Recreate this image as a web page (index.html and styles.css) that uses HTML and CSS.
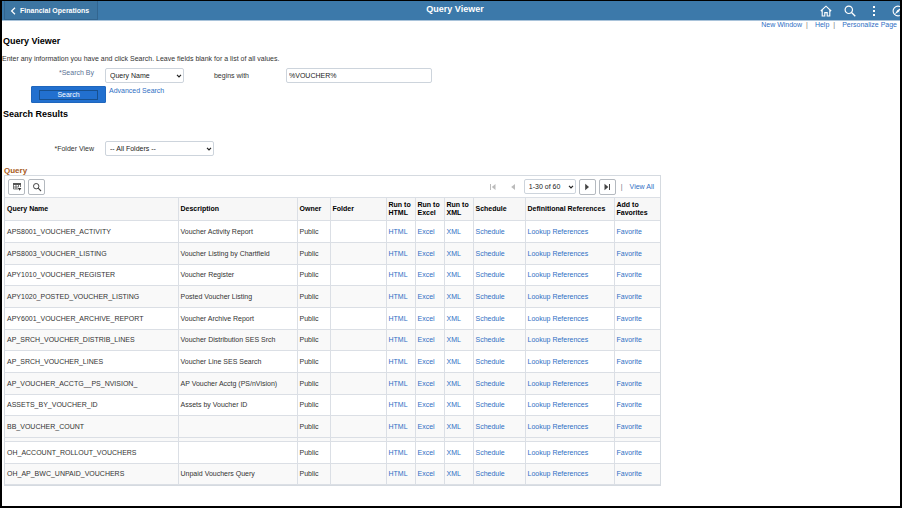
FILE: index.html
```html
<!DOCTYPE html>
<html lang="en">
<head>
    <meta charset="UTF-8">
    <title>Query Viewer</title>
    <meta name="viewport" content="width=device-width, initial-scale=1.0">
    <link rel="stylesheet" href="styles.css">
</head>
<body>
    <header class="topbar">
        <button class="back" type="button">
            <svg width="6" height="8" viewBox="0 0 6 8"><path d="M5 0.8 1.6 4 5 7.2" fill="none" stroke="#fff" stroke-width="1.2"/></svg>
            Financial Operations
        </button>
        <h1>Query Viewer</h1>
        <nav class="top-icons">
            <button type="button" aria-label="Home"><svg width="12" height="12" viewBox="0 0 12 12"><path d="M.8 6 6 1.2 11.2 6M2.2 5v6h2.6V7.6h2.4V11h2.6V5" fill="none" stroke="#fff" stroke-width="1.1"/></svg></button>
            <button type="button" aria-label="Search"><svg width="12" height="12" viewBox="0 0 12 12"><circle cx="4.8" cy="4.8" r="3.7" fill="none" stroke="#fff" stroke-width="1.2"/><path d="M7.5 7.5 11.3 11.3" stroke="#fff" stroke-width="1.3"/></svg></button>
            <button type="button" aria-label="Actions"><svg width="12" height="12" viewBox="0 0 12 12"><path d="M5 1h2v2H5zM5 5h2v2H5zM5 9h2v2H5z" fill="#fff"/></svg></button>
            <button type="button" aria-label="Navigator"><svg width="12" height="12" viewBox="0 0 12 12"><circle cx="6" cy="6" r="4.9" fill="none" stroke="#fff" stroke-width="1.1"/><path d="M9.2 2.8 6.8 6.8 2.8 9.2 5.2 5.2z" fill="#fff"/></svg></button>
        </nav>
    </header>

    <div class="page-links">
        <a href="#">New Window</a><span>|</span>
        <a href="#">Help</a><span>|</span>
        <a href="#">Personalize Page</a>
    </div>

    <main>
        <h2>Query Viewer</h2>
        <p class="intro">Enter any information you have and click Search. Leave fields blank for a list of all values.</p>
        <form class="search-form">
            <div class="form-row">
                <label class="search-by" for="searchBy">*Search By</label>
                <select id="searchBy" class="by-select"><option>Query Name</option></select>
                <label class="operator" for="searchText">begins with</label>
                <input type="text" id="searchText" value="%VOUCHER%">
            </div>
            <div class="form-actions">
                <button type="button" class="search-btn"><span>Search</span></button>
                <a href="#">Advanced Search</a>
            </div>
        </form>

        <h2 class="results-title">Search Results</h2>
        <div class="form-row folder-row">
            <label for="folder">*Folder View</label>
            <select id="folder" class="folder-select"><option>-- All Folders --</option></select>
        </div>

        <section class="grid">
            <h3>Query</h3>
            <div class="grid-box">
                <div class="toolbar">
                    <button type="button" class="tool" aria-label="Grid actions"><svg width="10" height="10" viewBox="0 0 10 10"><path d="M1 1h8v2H1z" fill="#555"/><path d="M1.5 1.5v5.5H6M1.5 5h5M4 2v5M6.5 2v3M8.5 2v3" fill="none" stroke="#555" stroke-width=".8"/><path d="M5.8 6h3.6L7.6 8.8z" fill="#333"/></svg></button>
                    <button type="button" class="tool" aria-label="Find"><svg width="10" height="10" viewBox="0 0 10 10"><circle cx="4.2" cy="4.2" r="2.7" fill="none" stroke="#444"/><path d="M6.2 6.2 9 9" stroke="#444" stroke-width="1.1"/></svg></button>
                    <div class="pager">
                        <button type="button" class="flat" aria-label="First" disabled><svg width="8" height="8" viewBox="0 0 8 8"><path d="M1 1h1v6H1zM6.5 1v6L2.8 4z" fill="#bbb"/></svg></button>
                        <button type="button" class="flat" aria-label="Previous" disabled><svg width="8" height="8" viewBox="0 0 8 8"><path d="M6 1v6L2.2 4z" fill="#bbb"/></svg></button>
                        <select class="page-select" aria-label="Rows"><option>1-30 of 60</option></select>
                        <button type="button" class="tool" aria-label="Next"><svg width="8" height="8" viewBox="0 0 8 8"><path d="M2.2 .8v6.4L6 4z" fill="#444"/></svg></button>
                        <button type="button" class="tool" aria-label="Last"><svg width="8" height="8" viewBox="0 0 8 8"><path d="M1.5 .8v6.4L5.3 4zM6 1h1v6H6z" fill="#444"/></svg></button>
                        <span class="sep">|</span>
                        <a href="#">View All</a>
                    </div>
                </div>
                <table>
                    <colgroup>
                        <col class="c-name"><col class="c-desc"><col class="c-owner"><col class="c-folder">
                        <col class="c-run"><col class="c-run"><col class="c-run"><col class="c-sched"><col class="c-refs"><col class="c-fav">
                    </colgroup>
                    <thead>
                        <tr><th>Query Name</th><th>Description</th><th>Owner</th><th>Folder</th><th>Run to HTML</th><th>Run to Excel</th><th>Run to XML</th><th>Schedule</th><th>Definitional References</th><th>Add to Favorites</th></tr>
                    </thead>
                    <tbody>
                        <tr><td>APS8001_VOUCHER_ACTIVITY</td><td>Voucher Activity Report</td><td>Public</td><td></td><td><a href="#">HTML</a></td><td><a href="#">Excel</a></td><td><a href="#">XML</a></td><td><a href="#">Schedule</a></td><td><a href="#">Lookup References</a></td><td><a href="#">Favorite</a></td></tr>
                        <tr><td>APS8003_VOUCHER_LISTING</td><td>Voucher Listing by Chartfield</td><td>Public</td><td></td><td><a href="#">HTML</a></td><td><a href="#">Excel</a></td><td><a href="#">XML</a></td><td><a href="#">Schedule</a></td><td><a href="#">Lookup References</a></td><td><a href="#">Favorite</a></td></tr>
                        <tr><td>APY1010_VOUCHER_REGISTER</td><td>Voucher Register</td><td>Public</td><td></td><td><a href="#">HTML</a></td><td><a href="#">Excel</a></td><td><a href="#">XML</a></td><td><a href="#">Schedule</a></td><td><a href="#">Lookup References</a></td><td><a href="#">Favorite</a></td></tr>
                        <tr><td>APY1020_POSTED_VOUCHER_LISTING</td><td>Posted Voucher Listing</td><td>Public</td><td></td><td><a href="#">HTML</a></td><td><a href="#">Excel</a></td><td><a href="#">XML</a></td><td><a href="#">Schedule</a></td><td><a href="#">Lookup References</a></td><td><a href="#">Favorite</a></td></tr>
                        <tr><td>APY6001_VOUCHER_ARCHIVE_REPORT</td><td>Voucher Archive Report</td><td>Public</td><td></td><td><a href="#">HTML</a></td><td><a href="#">Excel</a></td><td><a href="#">XML</a></td><td><a href="#">Schedule</a></td><td><a href="#">Lookup References</a></td><td><a href="#">Favorite</a></td></tr>
                        <tr><td>AP_SRCH_VOUCHER_DISTRIB_LINES</td><td>Voucher Distribution SES Srch</td><td>Public</td><td></td><td><a href="#">HTML</a></td><td><a href="#">Excel</a></td><td><a href="#">XML</a></td><td><a href="#">Schedule</a></td><td><a href="#">Lookup References</a></td><td><a href="#">Favorite</a></td></tr>
                        <tr><td>AP_SRCH_VOUCHER_LINES</td><td>Voucher Line SES Search</td><td>Public</td><td></td><td><a href="#">HTML</a></td><td><a href="#">Excel</a></td><td><a href="#">XML</a></td><td><a href="#">Schedule</a></td><td><a href="#">Lookup References</a></td><td><a href="#">Favorite</a></td></tr>
                        <tr><td>AP_VOUCHER_ACCTG__PS_NVISION_</td><td>AP Voucher Acctg (PS/nVision)</td><td>Public</td><td></td><td><a href="#">HTML</a></td><td><a href="#">Excel</a></td><td><a href="#">XML</a></td><td><a href="#">Schedule</a></td><td><a href="#">Lookup References</a></td><td><a href="#">Favorite</a></td></tr>
                        <tr><td>ASSETS_BY_VOUCHER_ID</td><td>Assets by Voucher ID</td><td>Public</td><td></td><td><a href="#">HTML</a></td><td><a href="#">Excel</a></td><td><a href="#">XML</a></td><td><a href="#">Schedule</a></td><td><a href="#">Lookup References</a></td><td><a href="#">Favorite</a></td></tr>
                        <tr><td>BB_VOUCHER_COUNT</td><td></td><td>Public</td><td></td><td><a href="#">HTML</a></td><td><a href="#">Excel</a></td><td><a href="#">XML</a></td><td><a href="#">Schedule</a></td><td><a href="#">Lookup References</a></td><td><a href="#">Favorite</a></td></tr>
                    </tbody>
                    <tbody class="more">
                        <tr class="gap"><td></td><td></td><td></td><td></td><td></td><td></td><td></td><td></td><td></td><td></td></tr>
                        <tr><td>OH_ACCOUNT_ROLLOUT_VOUCHERS</td><td></td><td>Public</td><td></td><td><a href="#">HTML</a></td><td><a href="#">Excel</a></td><td><a href="#">XML</a></td><td><a href="#">Schedule</a></td><td><a href="#">Lookup References</a></td><td><a href="#">Favorite</a></td></tr>
                        <tr><td>OH_AP_BWC_UNPAID_VOUCHERS</td><td>Unpaid Vouchers Query</td><td>Public</td><td></td><td><a href="#">HTML</a></td><td><a href="#">Excel</a></td><td><a href="#">XML</a></td><td><a href="#">Schedule</a></td><td><a href="#">Lookup References</a></td><td><a href="#">Favorite</a></td></tr>
                    </tbody>
                </table>
            </div>
        </section>
    </main>
</body>
</html>
```
FILE: styles.css
```css
* {
    box-sizing: border-box;
}
body {
    margin: 0;
    min-height: 100vh;
    border: 2px solid #000;
    border-top-width: 1px;
    background: #fff;
    color: #333;
    font-family: Arial, "Liberation Sans", sans-serif;
    font-size: 7px;
    line-height: 8px;
    overflow-x: hidden;
}
a {
    color: #2f6fc4;
    text-decoration: none;
}
h1, h2, h3, p {
    margin: 0;
}
button, select, input {
    font: inherit;
    color: inherit;
    margin: 0;
}
button {
    padding: 0;
    cursor: pointer;
}

/* top bar */
.topbar {
    display: grid;
    grid-template-columns: 1fr auto 1fr;
    height: 20px;
    background: #3c79aa;
    border-bottom: 1px solid #a9c3da;
    overflow: hidden;
}
.back {
    display: flex;
    align-items: center;
    justify-self: start;
    gap: 4px;
    margin-left: 2px;
    padding: 2px 8px 0 5px;
    background: #3c75a2;
    border: 1px solid #32658f;
    border-top: none;
    color: #fff;
    font-weight: bold;
}
h1 {
    padding-left: 8px;
    color: #fff;
    font-size: 9px;
    line-height: 17px;
}
.top-icons {
    display: flex;
    justify-content: flex-end;
    align-items: center;
    gap: 12px;
    margin-right: -4px;
}
.top-icons button {
    display: flex;
    background: none;
    border: none;
}
.page-links {
    display: flex;
    justify-content: flex-end;
    padding: 0 3px 0 0;
}
.page-links span {
    margin: 0 7px 0 4px;
    color: #777;
}

/* search form */
h2 {
    padding-left: 1px;
    color: #000;
    font-size: 9px;
    line-height: 12px;
}
main {
    padding-top: 6px;
}
.intro {
    margin-top: 8px;
}
.form-row {
    display: flex;
    align-items: center;
    margin-top: 5px;
}
.form-row label {
    width: 92px;
    margin-right: 11px;
    text-align: right;
}
.form-row .search-by {
    align-self: flex-start;
    padding-top: 1px;
    color: #5b7396;
}
.form-row .operator {
    width: 65px;
    margin-right: 37px;
}
select, input[type="text"] {
    height: 15px;
    padding: 0 3px;
    border: 1px solid #cdd4dc;
    border-radius: 2px;
    background: #fff;
    color: #222;
}
select {
    appearance: none;
    padding: 0 10px 0 4px;
    background: #fff url("data:image/svg+xml,%3Csvg xmlns='http://www.w3.org/2000/svg' width='6' height='4'%3E%3Cpath d='M1 .8 3 2.8 5 .8' fill='none' stroke='%23222' stroke-width='1.2'/%3E%3C/svg%3E") no-repeat right 1px center;
}
input[type="text"] {
    width: 146px;
    padding: 0 2px;
}
.by-select {
    width: 79px;
}
.folder-select {
    width: 109px;
}
.form-actions {
    display: flex;
    gap: 3px;
    margin: 3px 0 0 29px;
}
.form-actions a {
    padding-top: 1px;
}
.search-btn {
    width: 75px;
    height: 17px;
    padding: 0 7px;
    background: #2270cf;
    border: 1px solid #1f66bd;
    border-radius: 1px;
    color: #fff;
}
.search-btn span {
    display: block;
    border: 1px solid #17508f;
}
.results-title {
    margin-top: 5px;
}
.folder-row {
    margin-top: 21px;
}

/* results grid */
.grid {
    width: 657px;
    max-width: 100%;
    margin: 11px 0 0 2px;
}
h3 {
    color: #a85a20;
    font-size: 8px;
    line-height: 8px;
}
.grid-box {
    border: 1px solid #d5dae0;
}
.toolbar {
    display: flex;
    align-items: center;
    gap: 3px;
    height: 21px;
    padding: 0 6px 0 3px;
}
.tool {
    display: flex;
    align-items: center;
    justify-content: center;
    width: 17px;
    height: 16px;
    background: #fff;
    border: 1px solid #b4b9bf;
    border-radius: 2px;
}
.pager {
    display: flex;
    align-items: center;
    gap: 3px;
    margin-left: auto;
}
.flat {
    display: flex;
    margin: 0 4px 0 5px;
    background: none;
    border: none;
}
.page-select {
    width: 52px;
}
.sep {
    margin: 0 4px 0 2px;
    color: #777;
}
table {
    width: 100%;
    table-layout: fixed;
    border-collapse: collapse;
}
.c-name { width: 173px; }
.c-desc { width: 119px; }
.c-owner { width: 33px; }
.c-folder { width: 56px; }
.c-run { width: 29px; }
.c-sched { width: 52px; }
.c-refs { width: 89px; }
.c-fav { width: 46px; }
th, td {
    padding: 0 2px;
    border: 1px solid #dbdfe5;
    text-align: left;
    white-space: nowrap;
}
th {
    height: 23px;
    background: #f7f7f7;
    color: #000;
    white-space: normal;
}
td {
    height: 22px;
}
tr:nth-child(3n) td {
    height: 21px;
}
tr > :first-child {
    border-left: none;
}
tr > :last-child {
    border-right: none;
}
tbody tr:nth-child(even) td {
    background: #f9f9f9;
}
.more tr:nth-child(even) td {
    background: #fff;
}
.more tr:nth-child(odd) td {
    background: #f9f9f9;
}
.more .gap td {
    height: 4px;
}
```
